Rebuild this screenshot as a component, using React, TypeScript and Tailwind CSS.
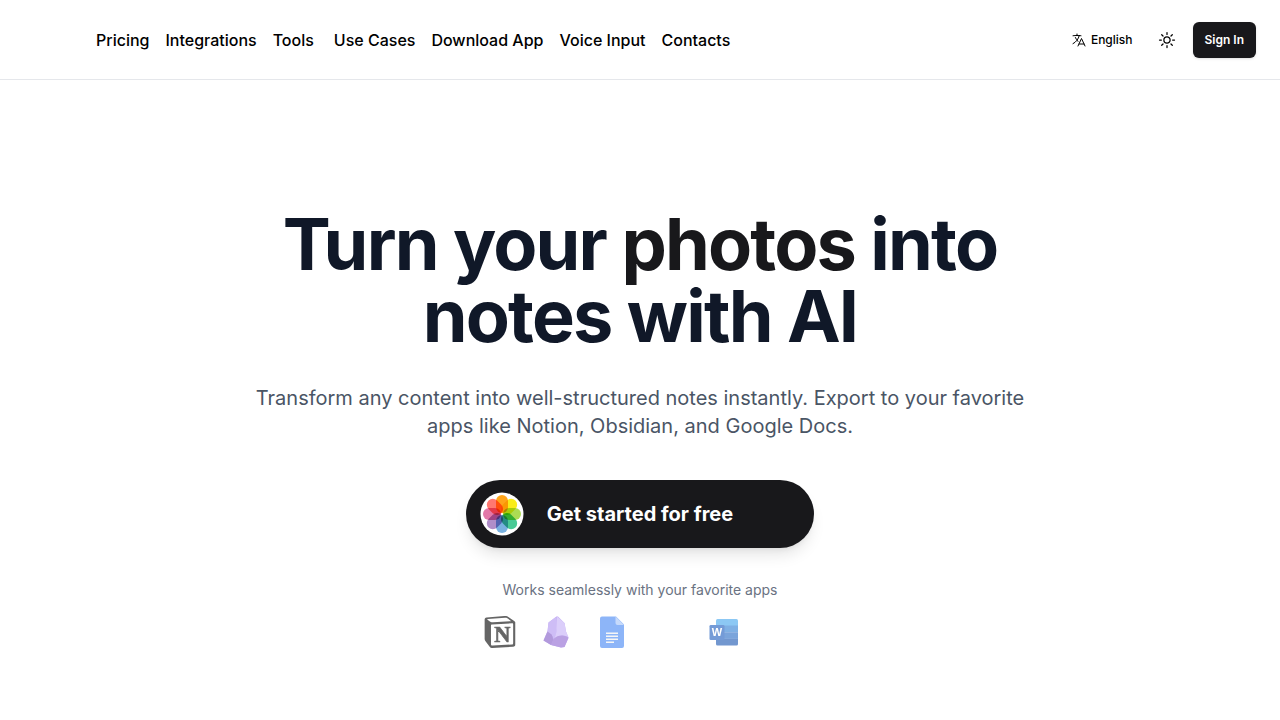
import { HiOutlineLanguage, HiOutlineSun } from 'react-icons/hi2';

const navLinks = [
  { label: 'Pricing', href: '#pricing' },
  { label: 'Integrations', href: '#integrations' },
  { label: 'Tools', href: '#tools', className: 'mr-1' },
  { label: 'Use Cases', href: '#use-cases' },
  { label: 'Download App', href: '#download' },
  { label: 'Voice Input', href: '#voice' },
  { label: 'Contacts', href: '#contacts' },
];

const petals = ['#ff9a00', '#f8ea00', '#a3d840', '#35c48b', '#69a8dd', '#a782c3', '#e0699f', '#ff6961'];

function PhotosIcon() {
  return (
    <svg viewBox="0 0 44 44" className="size-11 shrink-0 isolate" aria-hidden="true">
      <circle cx="22" cy="22" r="21.5" fill="#fff" />
      {petals.map((color, i) => (
        <rect
          key={color}
          x="16"
          y="3"
          width="12"
          height="18"
          rx="6"
          fill={color}
          fillOpacity="0.9"
          transform={`rotate(${i * 45} 22 22)`}
          className="mix-blend-multiply"
        />
      ))}
    </svg>
  );
}

function NotionIcon() {
  return (
    <svg viewBox="0 0 96 100" className="size-8" aria-hidden="true">
      <path
        fillRule="evenodd"
        d="M61.4 .2 6 4.3C1.6 4.700 0 7.600 0 11.100v60.700c0 2.700 1 5 3.300 8.200l13 16.900c2.100 2.700 4.100 3.300 8.200 3.100l64.200-3.900c5.400-.400 7-2.900 7-7.200V20.600c0-2.200-.900-2.800-3.400-4.700L74.200 3.100C69.900 0 68.200-.400 61.400 .200ZM25.900 19.500c-5.200 .400-6.400 .400-9.400-2L8.900 11.500c-.800-.800-.400-1.800 1.600-1.900l53.200-3.900c4.500-.400 6.800 1.200 8.500 2.500l9.100 6.600c.400 .200 1.400 1.400 .200 1.400ZM19.800 88.300V30.400c0-2.500 .800-3.700 3.100-3.900L86 22.800c2.100-.200 3.100 1.200 3.100 3.700V84c0 2.500-.400 4.700-3.900 4.900l-60.400 3.500c-3.500 .200-5-1-5-4.100Z"
      />
      <text x="55" y="82" textAnchor="middle" fontFamily="Liberation Serif, serif" fontWeight="700" fontSize="70" stroke="#000" strokeWidth="2">
        N
      </text>
    </svg>
  );
}

function ObsidianIcon() {
  return (
    <svg viewBox="0 0 32 32" className="size-8" aria-hidden="true">
      <path d="M16.500 .5 8.500 6.500 7.500 15 3.500 24.500 11 29 21 31.500 24.500 31 28.500 22 26 15.500 24.500 7 18 .5Z" fill="#9b78e8" />
      <path d="M16.500 .5 8.500 6.500 7.500 16Q12 17.500 13.500 23 17 18 17 12Z" fill="#af92f1" />
      <path d="M17 .5 24.500 7 26 15.500 28.500 21Q21 17 14 23 17 17 16.500 12Z" fill="#c4aef8" />
      <path d="M7.500 15.500 3.500 24.500 11 29Q15 24 11.500 18.500Z" fill="#8058c6" />
      <path d="M13.500 23Q20 17 28.500 21.500L24.500 31 21 31.500 11 29Z" fill="#8d63d2" />
    </svg>
  );
}

function GoogleDocsIcon() {
  return (
    <svg viewBox="0 0 32 32" className="size-8" aria-hidden="true">
      <path d="M6 .5h14l8 8V30a2 2 0 0 1-2 2H6a2 2 0 0 1-2-2V2.500a2 2 0 0 1 2-2Z" fill="#4285f4" />
      <path d="M19.500 .5 28 9h-6.500a2 2 0 0 1-2-2Z" fill="#a1c2fa" />
      <path d="M10 16.500h12V18H10zM10 19.500h12V21H10zM10 22.500h12V24H10zM10 25.500h8V27h-8z" fill="#f1f1f1" />
    </svg>
  );
}

function WordIcon() {
  return (
    <svg viewBox="0 0 32 32" className="size-8" aria-hidden="true">
      <path d="M9.500 3h19A1.500 1.500 0 0 1 30 4.500V10H8V4.500A1.500 1.500 0 0 1 9.500 3Z" fill="#41a5ee" />
      <path d="M8 9.500h22v6.700H8z" fill="#2b7cd3" />
      <path d="M8 16.200h22v6.700H8z" fill="#2368c4" />
      <path d="M8 22.800h22V28a1.500 1.500 0 0 1-1.500 1.500h-19A1.500 1.500 0 0 1 8 28Z" fill="#1553b0" />
      <rect x="1.500" y="9" width="15" height="15" rx="1.300" fill="#185abd" />
      <text x="9" y="20" textAnchor="middle" fontFamily="Liberation Sans, sans-serif" fontWeight="700" fontSize="11" fill="#fff">
        W
      </text>
    </svg>
  );
}

export default function App() {
  return (
    <div className="min-h-screen bg-white text-black font-['Inter',sans-serif]">
      <header className="flex h-20 items-center justify-between border-b border-gray-200 pl-24 pr-6">
        <nav className="flex items-center gap-4 font-medium">
          {navLinks.map((link) => (
            <a key={link.label} href={link.href} className={link.className}>
              {link.label}
            </a>
          ))}
        </nav>

        <div className="flex items-center text-xs">
          <button className="flex items-center gap-1 px-2 font-medium">
            <HiOutlineLanguage className="size-4" />
            English
          </button>
          <button aria-label="Toggle theme" className="mx-2 flex size-9 items-center justify-center">
            <HiOutlineSun className="size-5" />
          </button>
          <button className="h-9 rounded-md bg-[#18181b] px-3 font-semibold text-white shadow-sm">
            Sign In
          </button>
        </div>
      </header>

      <main className="flex flex-col items-center px-4 pt-32 text-center">
        <h1 className="max-w-4xl text-7xl leading-none font-bold tracking-tight text-gray-900">
          Turn your <span className="text-[#18181b]">photos</span> into
          <br />
          notes with AI
        </h1>

        <p className="mt-8 max-w-[800px] text-xl leading-7 text-gray-600">
          Transform any content into well-structured notes instantly. Export to your favorite apps like Notion,
          Obsidian, and Google Docs.
        </p>

        <button className="mt-10 flex h-[68px] w-[348px] items-center rounded-full bg-[#18181b] px-3.5 text-xl font-bold text-white shadow-lg">
          <PhotosIcon />
          <span className="flex-1 pr-11">Get started for free</span>
        </button>

        <p className="mt-8 text-sm text-gray-500">Works seamlessly with your favorite apps</p>

        <div className="mt-4 flex gap-6 opacity-60">
          <NotionIcon />
          <ObsidianIcon />
          <GoogleDocsIcon />
          <span className="size-8" />
          <WordIcon />
          <span className="size-8" />
        </div>
      </main>
    </div>
  );
}
